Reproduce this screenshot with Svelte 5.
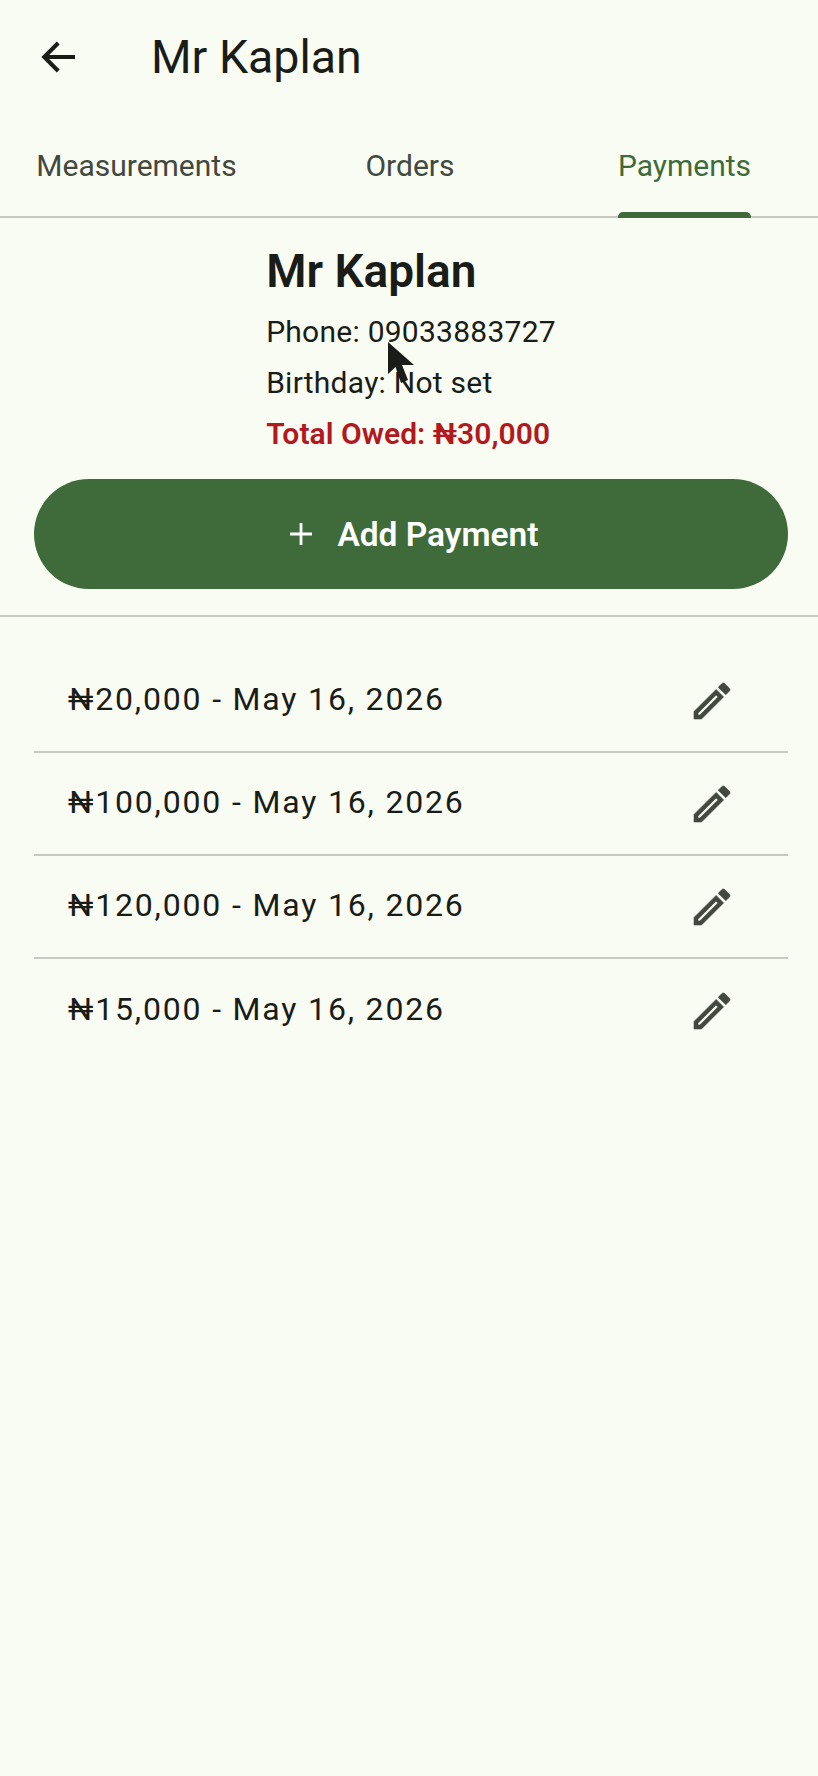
<script lang="ts">
  const tabs = ['Measurements', 'Orders', 'Payments'];
  const active = 'Payments';
  const payments = [
    { amount: 20000, date: 'May 16, 2026' },
    { amount: 100000, date: 'May 16, 2026' },
    { amount: 120000, date: 'May 16, 2026' },
    { amount: 15000, date: 'May 16, 2026' }
  ];
  const naira = (n: number) => '₦' + n.toLocaleString('en-US');
</script>

<div class="screen">
  <header class="appbar">
    <button class="back" aria-label="Back">
      <svg width="48" height="48" viewBox="0 0 24 24" fill="none">
        <path d="M20 12H4.8M11.6 5L4.6 12L11.6 19" stroke="#1a1c18" stroke-width="2" />
      </svg>
    </button>
    <h1>Mr Kaplan</h1>
  </header>

  <nav class="tabs">
    {#each tabs as tab}
      <div class="tab" class:active={tab === active}>
        <span class="tab-label">{tab}</span>
      </div>
    {/each}
  </nav>

  <section class="customer">
    <div class="info">
      <h2>Mr Kaplan</h2>
      <p>Phone: 09033883727</p>
      <p>Birthday: Not set</p>
      <p class="owed">Total Owed: ₦30,000</p>
    </div>
    <svg class="cursor" width="30" height="46" viewBox="0 0 30 46" aria-hidden="true">
      <path d="M1 0L1 32L8.500 25L14 41L21 38L15 23L27 23Z" fill="#1a1c1a" />
    </svg>
  </section>

  <div class="action">
    <button class="add">
      <svg width="30" height="30" viewBox="0 0 30 30" fill="none">
        <path d="M15 4V26M4 15H26" stroke="#fff" stroke-width="2.800" />
      </svg>
      Add Payment
    </button>
  </div>

  <hr class="divider" />

  <ul class="list">
    {#each payments as p}
      <li>
        <span class="row-text">{naira(p.amount)} - {p.date}</span>
        <svg width="48" height="48" viewBox="0 0 24 24" fill="#43483f" stroke="#43483f" stroke-width="0.300" aria-label="Edit">
          <path d="M3 17.250V21h3.750L17.810 9.940l-3.750-3.750L3 17.250zM5.920 19H5v-.920l9.060-9.060.920.920L5.920 19zM20.710 5.630l-2.340-2.340c-.200-.200-.450-.290-.710-.290s-.510.100-.700.290l-1.830 1.830 3.750 3.750 1.830-1.830c.390-.390.390-1.020 0-1.410z" />
        </svg>
      </li>
    {/each}
  </ul>
</div>

<style>
  :global(body) {
    margin: 0;
    background: #f8fcf2;
  }

  .screen {
    width: 818px;
    height: 1776px;
    overflow: hidden;
    background: #f8fcf2;
    color: #1a1c18;
    font-family: Roboto, 'Noto Sans', sans-serif;
  }

  .appbar {
    display: flex;
    align-items: center;
    height: 114px;
    padding-left: 35px;
    box-sizing: border-box;
  }

  .back {
    display: flex;
    padding: 0;
    border: 0;
    background: none;
  }

  h1 {
    margin: 0 0 0 68px;
    font-size: 46.500px;
    font-weight: 400;
    line-height: 1;
  }

  .tabs {
    display: grid;
    grid-template-columns: 273px 274px 1fr;
    height: 104px;
    border-bottom: 2px solid #c6c9bf;
    box-sizing: border-box;
  }

  .tab {
    display: flex;
    justify-content: center;
    color: #43483f;
    font-size: 30px;
  }

  .tab:last-child {
    padding-left: 4px;
  }

  .tab-label {
    position: relative;
    height: 104px;
    box-sizing: border-box;
    padding-top: 32px;
    line-height: 40px;
  }

  .tab.active {
    color: #3e6b39;
  }

  /* indicator sits on top of the tab bar border */
  .tab.active .tab-label::after {
    content: '';
    position: absolute;
    left: 0;
    right: 0;
    bottom: 0;
    height: 6px;
    border-radius: 5px 5px 0 0;
    background: #3e6b39;
  }

  .customer {
    position: relative;
    display: flex;
    justify-content: center;
    box-sizing: border-box;
    height: 261px;
    padding-left: 4px;
  }

  .info h2 {
    margin: 0;
    padding-top: 27px;
    font-size: 46px;
    font-weight: 600;
    line-height: 52px;
  }

  .info p {
    margin: 0;
    font-size: 30px;
    line-height: 51px;
    letter-spacing: 0.25px;
  }

  .info h2 + p {
    margin-top: 9px;
  }

  .info .owed {
    color: #b3181f;
    font-weight: 600;
    letter-spacing: 0.05px;
  }

  .cursor {
    position: absolute;
    left: 387px;
    top: 124px;
  }

  .action {
    padding: 0 30px 0 34px;
  }

  .add {
    display: flex;
    align-items: center;
    justify-content: center;
    gap: 21px;
    width: 100%;
    height: 110px;
    padding: 0 0 0 3px;
    border: 0;
    border-radius: 55px;
    background: #3e6b39;
    color: #fff;
    font: 600 33.500px Roboto, sans-serif;
  }

  .divider {
    height: 2px;
    margin: 26px 0 0;
    border: 0;
    background: #c6c9bf;
  }

  .list {
    list-style: none;
    margin: 33px 30px 0 34px;
    padding: 0;
  }

  .list li {
    display: flex;
    align-items: center;
    justify-content: space-between;
    height: 103px;
    padding: 0 52px 0 34px;
    box-sizing: border-box;
    border-bottom: 2px solid #c6c9bf;
  }

  .list li:last-child {
    border-bottom: 0;
  }

  .row-text {
    margin-bottom: 4px;
    font-size: 32px;
    letter-spacing: 1.830px;
  }
</style>
